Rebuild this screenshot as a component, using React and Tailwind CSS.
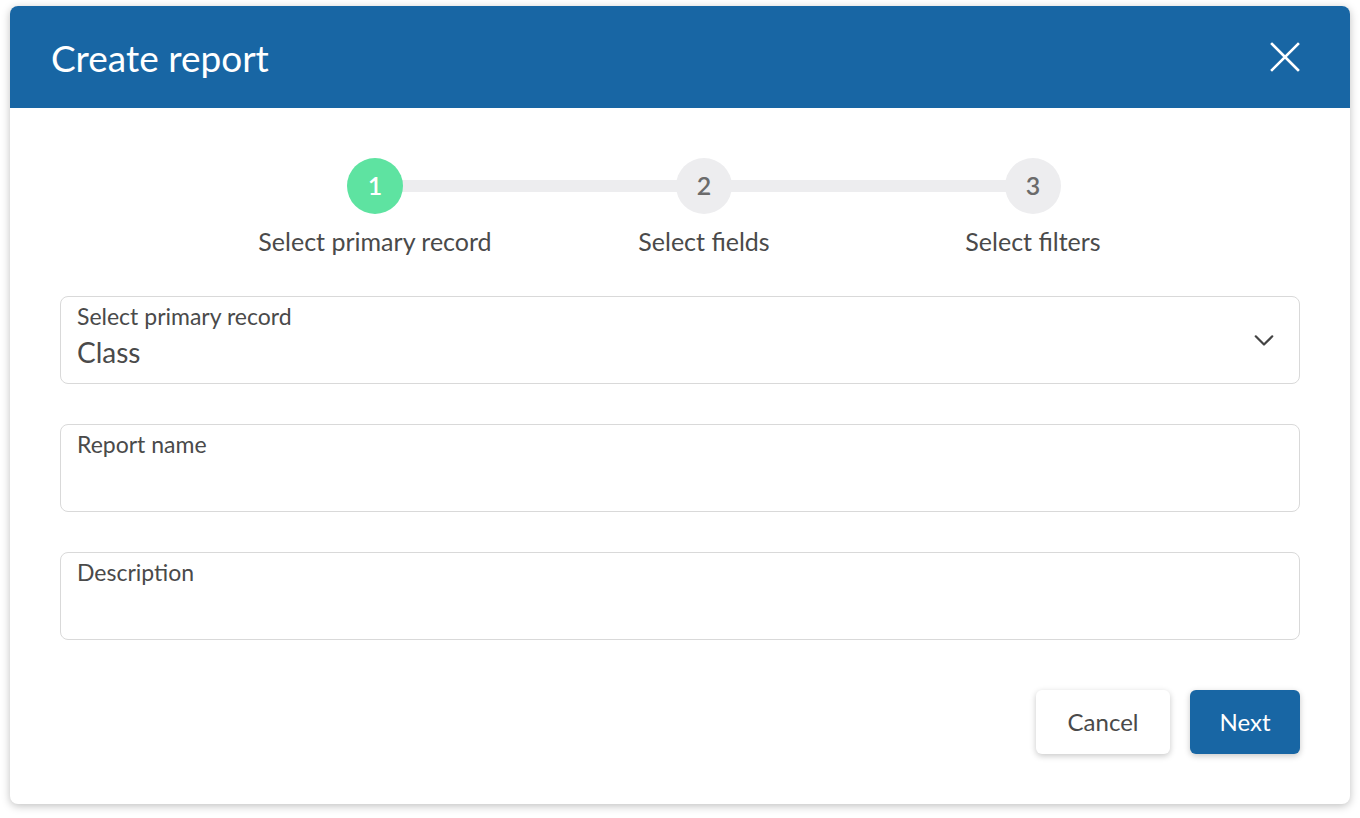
import React from 'react';

const font = { fontFamily: '"Lato", "Open Sans", sans-serif' };

const steps = ['Select primary record', 'Select fields', 'Select filters'];

function Stepper({ active = 0 }) {
  return (
    <div className="flex justify-center pl-[48px] pt-[50px]">
      <div className="relative flex w-[987px]">
        {/* connector line */}
        <div className="absolute left-[165px] right-[165px] top-[22px] h-[12px] bg-[#ededef]" />
        {steps.map((label, i) => (
          <div key={label} className="relative flex w-[329px] flex-col items-center">
            <div
              className={
                i === active
                  ? 'flex h-[56px] w-[56px] items-center justify-center rounded-full bg-[#5ee3a1] text-[25px] font-semibold text-white'
                  : 'flex h-[56px] w-[56px] items-center justify-center rounded-full bg-[#ededef] text-[25px] font-semibold text-[#6b6b6b]'
              }
            >
              {i + 1}
            </div>
            <div className="mt-[12px] text-[25px] leading-[30px] text-[#4a4a4a]">{label}</div>
          </div>
        ))}
      </div>
    </div>
  );
}

function Field({ label, value, select }) {
  return (
    <div className="flex h-[88px] items-center rounded-[8px] border border-[#d9d9d9] bg-white px-[16px]">
      <div className="flex h-full flex-1 flex-col pt-[4px]">
        <div className="text-[23px] leading-[30px] text-[#4a4a4a]">{label}</div>
        {value && <div className="mt-[4px] text-[28px] leading-[34px] text-[#4a4a4a]">{value}</div>}
      </div>
      {select && (
        <svg width="22" height="22" viewBox="0 0 24 24" fill="none" stroke="#444" strokeWidth="2.4" strokeLinecap="round" strokeLinejoin="round" className="mr-[8px]">
          <path d="M3 8l9 9 9-9" />
        </svg>
      )}
    </div>
  );
}

export default function App() {
  return (
    <div className="min-h-screen bg-white pt-[6px]" style={font}>
      <div className="mx-[10px] h-[798px] overflow-hidden rounded-[8px] bg-white shadow-[0_2px_8px_rgba(0,0,0,0.25)]">
        {/* Header */}
        <div className="flex h-[102px] items-center justify-between bg-[#1866a4] pl-[41px] pr-[50px]">
          <h2 className="text-[37px] font-normal leading-none text-white">Create report</h2>
          <button className="text-white">
            <svg width="30" height="30" viewBox="0 0 30 30" fill="none" stroke="white" strokeWidth="2.6" strokeLinecap="square">
              <path d="M2 2l26 26M28 2L2 28" />
            </svg>
          </button>
        </div>

        <Stepper active={0} />

        <div className="flex flex-col gap-[40px] px-[50px] pt-[40px]">
          <Field label="Select primary record" value="Class" select />
          <Field label="Report name" />
          <Field label="Description" />
        </div>

        <div className="flex justify-end gap-[20px] px-[50px] pt-[50px]">
          <button className="h-[64px] w-[134px] rounded-[6px] bg-white text-[24px] text-[#4a4a4a] shadow-[0_2px_6px_rgba(0,0,0,0.22)]">
            Cancel
          </button>
          <button className="h-[64px] w-[110px] rounded-[6px] bg-[#1866a4] text-[24px] text-white shadow-[0_2px_6px_rgba(0,0,0,0.22)]">
            Next
          </button>
        </div>
      </div>
    </div>
  );
}
